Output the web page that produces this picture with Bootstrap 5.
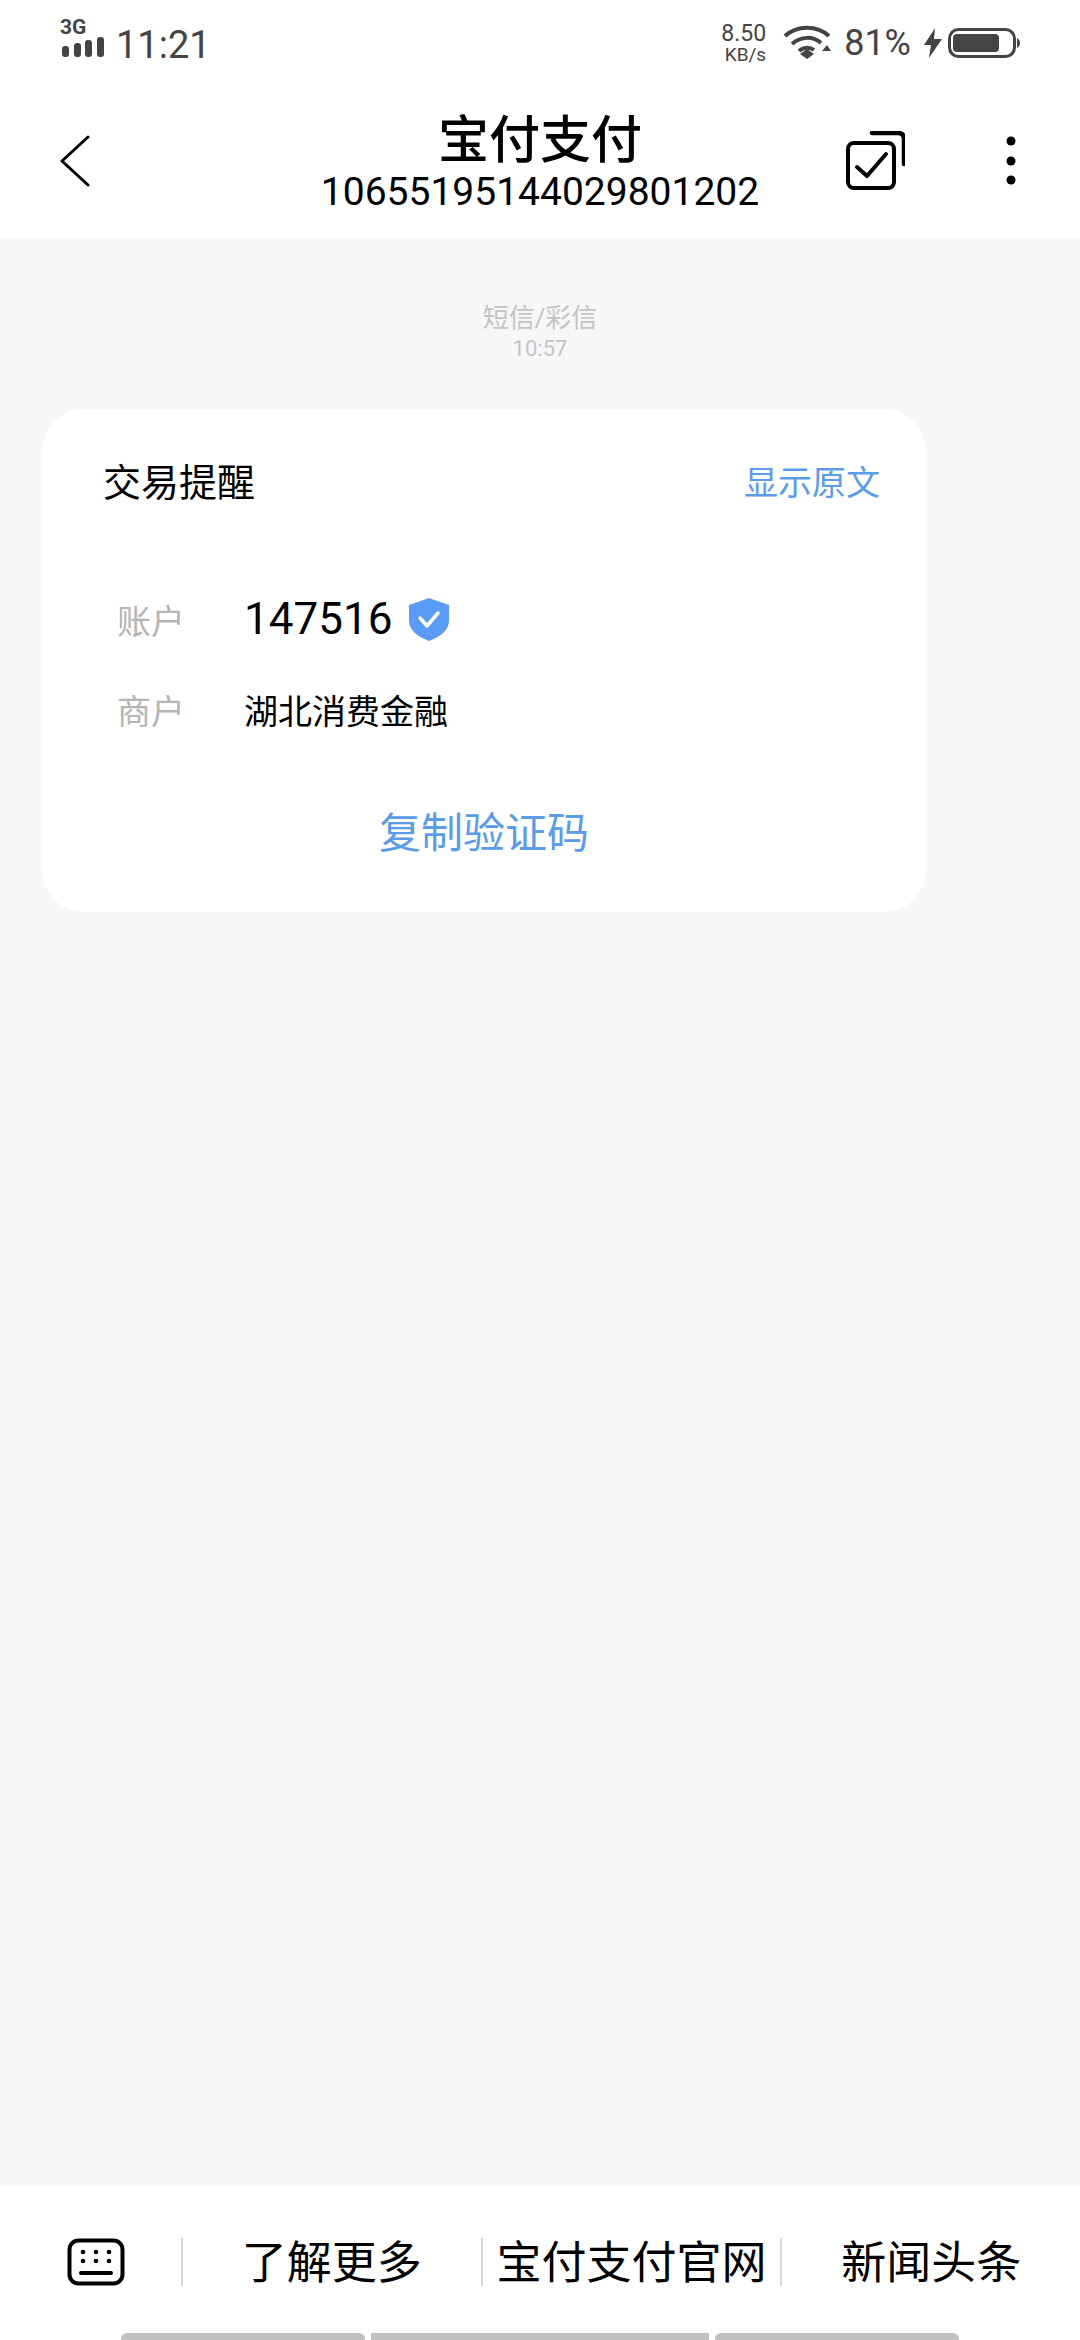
<!DOCTYPE html>
<html lang="zh-CN">
<head>
  <meta charset="UTF-8" />
  <meta name="viewport" content="width=device-width, initial-scale=1" />
  <title>宝付支付</title>
  <link href="https://cdn.jsdelivr.net/npm/bootstrap@5.3.3/dist/css/bootstrap.min.css" rel="stylesheet">
  <style>
    body {
      width: 1080px;
      height: 2340px;
      overflow: hidden;
      background-color: #fff;
      font-family: Roboto, "Noto Sans CJK SC", sans-serif;
      color: #000;
    }
    .phone { height: 2340px; }
    .status-bar { height: 80px; padding: 20px 60px 0; color: #444; }
    .net-3g { font-size: 21px; font-weight: 700; line-height: 15px; margin-bottom: 1px; }
    .clock { font-size: 38px; line-height: 40px; margin-left: 10px; margin-top: 5px; }
    .speed { text-align: right; margin-top: 3px; }
    .speed-num { font-size: 23px; line-height: 22px; }
    .speed-unit { font-size: 19px; line-height: 19px; }
    .percent { font-size: 36px; line-height: 40px; margin-top: 3px; }
    .top-bar { height: 158px; padding-top: 4px; }
    .side-cell { width: 235px; flex-shrink: 0; }
    .title-main { font-size: 51px; line-height: 58px; font-weight: 500; padding-top: 3px; }
    .title-num { font-size: 39px; line-height: 42px; padding-top: 1px; }
    .chat-area { background-color: #f7f7f7; padding: 62px 42px 0; }
    .msg-type { color: #c4c4c4; font-size: 26px; line-height: 36px; }
    .msg-time { color: #c4c4c4; font-size: 22px; line-height: 26px; }
    .msg-card { width: 884px; margin-top: 47px; padding: 49px 46px 48px 61px; border-radius: 42px; background: #fff; }
    .msg-head { font-size: 38px; line-height: 50px; }
    .link-blue { color: #5c9ce6; }
    .show-raw { font-size: 34px; line-height: 50px; }
    .msg-row { height: 60px; line-height: 60px; }
    .msg-row.first { margin-top: 81px; }
    .msg-row.second { margin-top: 33px; }
    .row-label { width: 141px; padding-left: 14px; color: #b5b5b5; font-size: 34px; }
    .label-low { padding-top: 6px; }
    .row-code { font-size: 44px; }
    .row-text { font-size: 34px; }
    .copy-code { font-size: 42px; line-height: 60px; margin-top: 62px; margin-left: -15px; }
    .bottom-bar { height: 154px; padding-top: 52px; }
    .key-cell { width: 181px; padding-left: 67px; }
    .quick-cell { width: 300px; height: 48px; border-left: 2px solid #d8d8d8; font-size: 45px; line-height: 52px; }
    .hint-bars { height: 7px; gap: 6px; }
    .hint-bars div { height: 7px; background-color: #c0c0c0; }
  </style>
</head>
<body>

<div class="phone d-flex flex-column">

  <div class="status-bar d-flex justify-content-between align-items-start">
    <div class="d-flex align-items-start">
      <div>
        <div class="net-3g">3G</div>
        <svg width="46" height="21" viewBox="0 0 46 21" class="d-block">
          <rect x="2" y="10" width="7" height="11" rx="3" fill="#444"/>
          <rect x="14" y="7" width="7" height="14" rx="3" fill="#444"/>
          <rect x="25" y="4" width="7" height="17" rx="3" fill="#444"/>
          <rect x="37" y="1" width="7" height="20" rx="3" fill="#444"/>
        </svg>
      </div>
      <div class="clock">11:21</div>
    </div>
    <div class="d-flex align-items-start">
      <div class="speed"><div class="speed-num">8.50</div><div class="speed-unit">KB/s</div></div>
      <svg width="48" height="36" viewBox="0 0 48 36" class="mt-1" style="margin-left:17px" fill="none" stroke="#444" stroke-width="4">
        <path d="M2 12C14 1 34 1 46 12"/>
        <path d="M9 20C18 12 30 12 38 19"/>
        <path d="M16 27C20 23 27 23 31 26"/>
        <path d="M17 30L24 25L31 30L24 35Z" fill="#444" stroke="none"/>
        <path d="M39 27L44 21L48 27Z" fill="#444" stroke="none"/>
      </svg>
      <div class="percent" style="margin-left:13px">81%</div>
      <svg width="18" height="30" viewBox="0 0 18 30" class="mt-2" style="margin-left:13px">
        <path d="M11 0L0 17H7L5 30L18 11H10Z" fill="#444"/>
      </svg>
      <svg width="72" height="30" viewBox="0 0 72 30" class="mt-2" style="margin-left:6px">
        <rect x="1.5" y="1.5" width="65" height="27" rx="9" fill="none" stroke="#444" stroke-width="3"/>
        <rect x="5" y="6" width="46" height="18" rx="4" fill="#444"/>
        <path d="M69 10C71 11 72 13 72 15C72 17 71 19 69 20Z" fill="#444"/>
      </svg>
    </div>
  </div>

  <div class="top-bar d-flex align-items-center">
    <div class="side-cell">
      <svg width="32" height="52" viewBox="0 0 32 52" class="d-block" style="margin-left:59px" fill="none" stroke="#000" stroke-width="3" stroke-linecap="round" stroke-linejoin="round">
        <path d="M29 2L3 26L29 50"/>
      </svg>
    </div>
    <div class="flex-grow-1 text-center">
      <div class="title-main">宝付支付</div>
      <div class="title-num">10655195144029801202</div>
    </div>
    <div class="side-cell d-flex align-items-center justify-content-end" style="padding-right:63px">
      <svg width="60" height="60" viewBox="0 0 60 60" fill="none" stroke="#000" stroke-linecap="round" stroke-linejoin="round">
        <rect x="3" y="12" width="46" height="45" rx="6" stroke-width="4"/>
        <path d="M27 2H53C57 2 59 4 59 8V33" stroke-width="4.5"/>
        <path d="M12 36L22 45L41 23" stroke-width="4"/>
      </svg>
      <svg width="12" height="52" viewBox="0 0 12 52" style="margin-left:100px">
        <circle cx="6" cy="6" r="4.5"/><circle cx="6" cy="26" r="4.5"/><circle cx="6" cy="45" r="4.5"/>
      </svg>
    </div>
  </div>

  <div class="chat-area flex-grow-1">
    <div class="text-center">
      <div class="msg-type">短信/彩信</div>
      <div class="msg-time">10:57</div>
    </div>
    <div class="msg-card card border-0">
      <div class="d-flex justify-content-between">
        <div class="msg-head">交易提醒</div>
        <div class="show-raw link-blue">显示原文</div>
      </div>
      <div class="msg-row first d-flex align-items-center">
        <div class="row-label label-low">账户</div>
        <div class="row-code">147516</div>
        <svg width="42" height="44" viewBox="0 0 42 44" class="ms-3">
          <path d="M21 1L41 8V24C41 33 32 40 21 44C10 40 1 33 1 24V8Z" fill="#5a9cf5"/>
          <path d="M12 21L19 29L30 16" fill="none" stroke="#fff" stroke-width="3.5" stroke-linecap="round" stroke-linejoin="round"/>
        </svg>
      </div>
      <div class="msg-row second d-flex align-items-center">
        <div class="row-label">商户</div>
        <div class="row-text">湖北消费金融</div>
      </div>
      <div class="copy-code link-blue text-center">复制验证码</div>
    </div>
  </div>

  <div class="bottom-bar bg-white d-flex flex-column justify-content-between">
    <div class="d-flex">
      <div class="key-cell">
        <svg width="58" height="48" viewBox="0 0 58 48" class="d-block" fill="none" stroke="#000">
          <rect x="2.5" y="2.5" width="53" height="43" rx="9" stroke-width="4"/>
          <path d="M14 35H44" stroke-width="4" stroke-linecap="round"/>
          <g fill="#000" stroke="none">
            <circle cx="16" cy="14" r="2.3"/><circle cx="29" cy="14" r="2.3"/><circle cx="42" cy="14" r="2.3"/>
            <circle cx="16" cy="23" r="2.3"/><circle cx="29" cy="23" r="2.3"/><circle cx="42" cy="23" r="2.3"/>
          </g>
        </svg>
      </div>
      <div class="quick-cell text-center">了解更多</div>
      <div class="quick-cell text-center">宝付支付官网</div>
      <div class="quick-cell text-center">新闻头条</div>
    </div>
    <div class="hint-bars d-flex justify-content-center">
      <div class="rounded-top" style="width:244px"></div>
      <div style="width:338px"></div>
      <div class="rounded-top" style="width:244px"></div>
    </div>
  </div>

</div>

<script src="https://cdn.jsdelivr.net/npm/bootstrap@5.3.3/dist/js/bootstrap.bundle.min.js"></script>
</body>
</html>
